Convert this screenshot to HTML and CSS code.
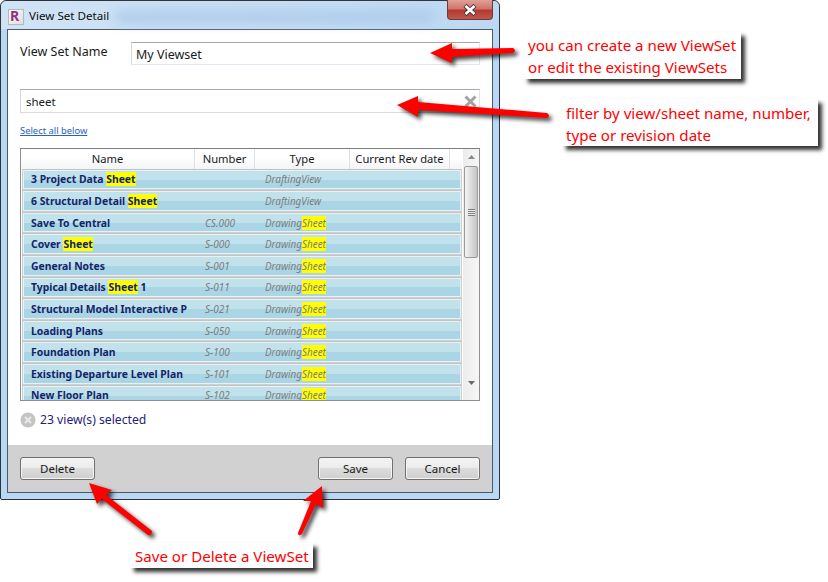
FILE: index.html
```html
<!DOCTYPE html>
<html lang="en">
<head>
    <meta charset="UTF-8">
    <title>View Set Detail</title>
    <link rel="stylesheet" href="styles.css">
</head>
<body>
    <div class="window">
        <div class="titlebar">
            <span class="appicon"><span class="appletter">R</span></span>
            <span class="titletext">View Set Detail</span>
            <span class="streak"></span>
            <span class="closebtn">
                <svg width="16" height="12" viewBox="0 0 16 12"><path d="M3 1.5 L13 10.5 M13 1.5 L3 10.5" stroke="#3c3c3c" stroke-width="4.4" fill="none"/><path d="M3.5 2 L12.5 10 M12.5 2 L3.5 10" stroke="#fff" stroke-width="2.6" fill="none"/></svg>
            </span>
        </div>
        <div class="client">
            <div class="body">
                <div class="namerow">
                    <label class="namelabel">View Set Name</label>
                    <div class="field namefield">My Viewset</div>
                </div>
                <div class="field filterfield">
                    <span>sheet</span>
                    <svg class="clearx" width="13" height="13" viewBox="0 0 13 13"><path d="M1.5 1.5 L11.5 11.5 M11.5 1.5 L1.5 11.5" stroke="#a2a2a2" stroke-width="3" fill="none"/></svg>
                </div>
                <a class="selectall">Select all below</a>
                <div class="table">
                    <div class="tablemain">
                        <div class="thead">
                            <div class="th c1">Name</div>
                            <div class="th c2">Number</div>
                            <div class="th c3">Type</div>
                            <div class="th c4">Current Rev date</div>
                        </div>
                        <div class="tr"><div class="td name">3 Project Data <mark>Sheet</mark></div><div class="td num"></div><div class="td type">DraftingView</div></div>
                        <div class="tr"><div class="td name">6 Structural Detail <mark>Sheet</mark></div><div class="td num"></div><div class="td type">DraftingView</div></div>
                        <div class="tr"><div class="td name">Save To Central</div><div class="td num">CS.000</div><div class="td type">Drawing<mark>Sheet</mark></div></div>
                        <div class="tr"><div class="td name">Cover <mark>Sheet</mark></div><div class="td num">S-000</div><div class="td type">Drawing<mark>Sheet</mark></div></div>
                        <div class="tr"><div class="td name">General Notes</div><div class="td num">S-001</div><div class="td type">Drawing<mark>Sheet</mark></div></div>
                        <div class="tr"><div class="td name">Typical Details <mark>Sheet</mark> 1</div><div class="td num">S-011</div><div class="td type">Drawing<mark>Sheet</mark></div></div>
                        <div class="tr"><div class="td name">Structural Model Interactive P</div><div class="td num">S-021</div><div class="td type">Drawing<mark>Sheet</mark></div></div>
                        <div class="tr"><div class="td name">Loading Plans</div><div class="td num">S-050</div><div class="td type">Drawing<mark>Sheet</mark></div></div>
                        <div class="tr"><div class="td name">Foundation Plan</div><div class="td num">S-100</div><div class="td type">Drawing<mark>Sheet</mark></div></div>
                        <div class="tr"><div class="td name">Existing Departure Level Plan</div><div class="td num">S-101</div><div class="td type">Drawing<mark>Sheet</mark></div></div>
                        <div class="tr"><div class="td name">New Floor Plan</div><div class="td num">S-102</div><div class="td type">Drawing<mark>Sheet</mark></div></div>
                    </div>
                    <div class="scrollbar">
                        <svg class="sarrow" width="7" height="4" viewBox="0 0 7 4"><path d="M3.500 0 L7 4 L0 4 Z" fill="#8a8a8a"/></svg>
                        <div class="thumb"><span class="grip"></span></div>
                        <svg class="sarrow down" width="7" height="4" viewBox="0 0 7 4"><path d="M0 0 L7 0 L3.500 4 Z" fill="#6a6a6a"/></svg>
                    </div>
                </div>
                <div class="status">
                    <svg class="statusicon" width="16" height="16" viewBox="0 0 16 16"><circle cx="8" cy="8" r="7.6" fill="#c4c4c4"/><path d="M5 5 L11 11 M11 5 L5 11" stroke="#e8e8e8" stroke-width="2.2" fill="none"/></svg>
                    <span>23 view(s) selected</span>
                </div>
            </div>
            <div class="footer">
                <button class="btn">Delete</button>
                <span class="spacer"></span>
                <button class="btn">Save</button>
                <button class="btn">Cancel</button>
            </div>
        </div>
    </div>

    <svg class="arrows" width="828" height="582" viewBox="0 0 828 582">
        <path d="M430 53 L452 43 L452 49 L513 48 Q517 50.500 513 53 L452 57 L452 63 Z" fill="#f00"/>
        <path d="M397 105 L418 96 L418 102 L547 113 Q551 116 547 118 L418 110 L418 117 Z" fill="#f00"/>
        <path d="M89 483 L112 490 L106 495 L152 531 Q152 536 148 535 L102 499 L97 504 Z" fill="#f00"/>
        <path d="M322 486 L323 508 L316 504 L302 534 Q298 537 298 533 L311 501 L303 501 Z" fill="#f00"/>
    </svg>

    <div class="note note1">you can create a new ViewSet<br>or edit the existing ViewSets</div>
    <div class="note note2">filter by view/sheet name, number,<br>type or revision date</div>
    <div class="note note3">Save or Delete a ViewSet</div>
</body>
</html>
```

FILE: styles.css
```css
html, body {
    margin: 0;
    padding: 0;
    background-color: white;
}
body {
    width: 828px;
    height: 582px;
    overflow: hidden;
    position: relative;
    font-family: "Noto Sans", "Open Sans", sans-serif;
}

.window {
    width: 500px;
    height: 500px;
    box-sizing: border-box;
    border: 1px solid #2e3338;
    border-radius: 6px 6px 2px 2px;
    background-color: #b9d8f5;
    padding: 0 6px 6px 6px;
    display: flex;
    flex-direction: column;
}

.titlebar {
    height: 28px;
    flex: none;
    display: flex;
    align-items: center;
    position: relative;
    margin: 0 -6px;
    padding: 0 6px;
    border-radius: 6px 6px 0 0;
    background: linear-gradient(90deg, #cfe3f5 0, #c6def4 60%, #bcd8f3 100%);
}
.appicon {
    width: 16px;
    height: 16px;
    margin: 3px 0 0 1px;
    background: linear-gradient(135deg, #ffffff, #dcdcdc);
    border: 1px solid #b8b8b8;
    box-sizing: border-box;
    display: flex;
}
.appletter {
    font-size: 14px;
    line-height: 12px;
    font-weight: bold;
    color: #96307f;
    margin-left: 1px;
}
.titletext {
    margin: 0 0 0 5px;
    font-size: 11.600px;
    color: #0c0c0c;
}
.streak {
    position: absolute;
    left: 115px;
    right: 65px;
    top: 10px;
    height: 12px;
    background: #adcbe9;
    filter: blur(6px);
}
.closebtn {
    position: absolute;
    top: -1px;
    right: 6px;
    width: 46px;
    height: 20px;
    box-sizing: border-box;
    border: 1px solid #6e3a38;
    border-top: none;
    border-radius: 0 0 4px 4px;
    background: linear-gradient(#e0a196 0, #d2746a 45%, #b33a30 55%, #c2574a 100%);
    display: flex;
    align-items: center;
    justify-content: center;
}

.client {
    flex: 1;
    display: flex;
    flex-direction: column;
    border: 1px solid #4c5a66;
    background-color: white;
}
.body {
    flex: 1;
    padding: 12px 12px 0 12px;
}

.namerow {
    display: flex;
}
.namelabel {
    width: 111px;
    padding-top: 1px;
    font-size: 12.500px;
    line-height: 18px;
    color: #1a1a1a;
}
.field {
    box-sizing: border-box;
    border: 1px solid #dfe7ef;
    border-top-color: #a8a8a8;
    border-left-color: #d8d8d8;
    color: #1a1a1a;
    display: flex;
    align-items: center;
}
.namefield {
    flex: 1;
    height: 23px;
    padding: 1px 0 0 4px;
    font-size: 12.500px;
}
.filterfield {
    height: 24px;
    margin-top: 24px;
    padding: 1px 0 0 5px;
    font-size: 11.500px;
    justify-content: space-between;
    border-bottom-color: #dcdcdc;
}
.clearx {
    margin-right: 2px;
}
.selectall {
    display: block;
    margin-top: 11px;
    font-size: 9.400px;
    line-height: 14px;
    color: #2a62c4;
    text-decoration: underline;
}

.table {
    margin-top: 10px;
    height: 253px;
    box-sizing: border-box;
    border: 1px solid #8c8f92;
    border-top-color: #7c7f82;
    display: flex;
    overflow: hidden;
}
.tablemain {
    width: 441px;
    overflow: hidden;
}
.thead {
    height: 19.600px;
    display: flex;
    background: linear-gradient(#ffffff 0, #ffffff 40%, #f3f4f6 100%);
}
.th {
    box-sizing: border-box;
    border-right: 1px solid #dcdfe3;
    font-size: 11.200px;
    line-height: 18px;
    padding-top: 1px;
    color: #1a1a1a;
    text-align: center;
}
.c1 { width: 174px; }
.c2 { width: 60px; }
.c3 { width: 95px; }
.c4 { width: 100px; }

.tr {
    height: 21.6px;
    box-sizing: border-box;
    margin-left: 1px;
    border: 1px solid #cfcfcf;
    border-top-color: #c4c4c4;
    box-shadow: inset 0 0 0 1px #e6f2f6;
    background: linear-gradient(#c1e1eb 0, #c1e1eb 50%, #a9d5e4 50%, #a9d5e4 100%);
    display: flex;
    align-items: center;
    overflow: hidden;
}
.td {
    white-space: nowrap;
}
.td mark {
    background-color: #ffff00;
    color: inherit;
}
.name {
    width: 174px;
    margin-left: 8px;
    font-size: 10.400px;
    font-weight: bold;
    color: #14246a;
}
.num {
    width: 60px;
    font-size: 10px;
    font-style: italic;
    color: #7d7d7d;
}
.type {
    font-size: 9.900px;
    font-style: italic;
    color: #7d7d7d;
}

.scrollbar {
    flex: 1;
    margin-left: 1px;
    background: linear-gradient(90deg, #ececec, #f6f6f6);
    display: flex;
    flex-direction: column;
    align-items: center;
    padding-top: 6px;
}
.sarrow {
    flex: none;
}
.sarrow.down {
    margin-top: 123px;
}
.thumb {
    flex: none;
    width: 14px;
    height: 92px;
    margin-top: 7px;
    box-sizing: border-box;
    border: 1px solid #9b9b9b;
    border-radius: 2px;
    background: linear-gradient(90deg, #f4f4f4, #dcdcdc 50%, #c4c4c4);
    display: flex;
    align-items: center;
    justify-content: center;
}
.grip {
    width: 7px;
    height: 7px;
    background: repeating-linear-gradient(#7c7c7c 0, #7c7c7c 1px, #eeeeee 1px, #eeeeee 2px);
}

.status {
    display: flex;
    align-items: center;
    gap: 4px;
    margin-top: 11px;
    font-size: 12.200px;
    line-height: 16px;
    color: #1c1c82;
}
.statusicon {
    filter: blur(0.4px);
}

.footer {
    height: 47px;
    flex: none;
    box-sizing: border-box;
    background-color: #d1d1d1;
    display: flex;
    gap: 12px;
    padding: 12px 12px 0 12px;
}
.spacer {
    flex: 1;
}
.btn {
    width: 75px;
    height: 23px;
    box-sizing: border-box;
    border: 1px solid #707070;
    border-radius: 3px;
    padding: 0;
    font-family: inherit;
    font-size: 11.500px;
    color: #1a1a1a;
    background: linear-gradient(#f4f4f4 0, #ebebeb 50%, #dcdcdc 50%, #cfcfcf 100%);
    box-shadow: inset 0 0 0 1px #f4f4f4;
}

.arrows {
    position: absolute;
    left: 0;
    top: 0;
    filter: drop-shadow(3px 3px 2px rgba(0, 0, 0, 0.75));
}

.note {
    position: absolute;
    box-sizing: border-box;
    background-color: white;
    color: #f00;
    font-size: 15.100px;
    line-height: 22px;
    white-space: nowrap;
    box-shadow: 4px 4px 4px rgba(0, 0, 0, 0.8);
}
.note1 {
    left: 524px;
    top: 32px;
    width: 217px;
    height: 47px;
    padding: 2px 0 0 4px;
}
.note2 {
    left: 562px;
    top: 99px;
    width: 256px;
    height: 47px;
    padding: 3px 0 0 4px;
}
.note3 {
    left: 130px;
    top: 543px;
    width: 183px;
    height: 25px;
    padding: 2px 0 0 5px;
}
```
